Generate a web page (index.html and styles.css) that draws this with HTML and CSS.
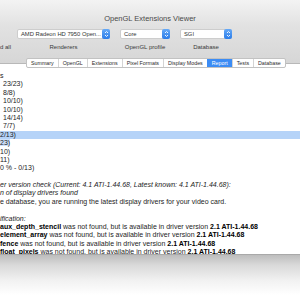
FILE: index.html
```html
<!DOCTYPE html>
<html lang="en">

<head>
  <meta charset="UTF-8">
  <title>OpenGL Extensions Viewer</title>
  <link rel="stylesheet" href="styles.css">
</head>

<body>
  <div class="window">
    <div class="toolbar">
      <div class="title">OpenGL Extensions Viewer</div>
      <div class="controls">
        <div></div>
        <div class="popup">
          <span class="popup-text">AMD Radeon HD 7950 Open...</span>
          <span class="stepper"><svg width="7" height="10" viewBox="0 0 7 10"><path d="M2 4 L3.5 2.5 L5 4 M2 6 L3.5 7.5 L5 6" fill="none" stroke="#fff" stroke-width="0.9"/></svg></span>
        </div>
        <div class="popup">
          <span class="popup-text">Core</span>
          <span class="stepper"><svg width="7" height="10" viewBox="0 0 7 10"><path d="M2 4 L3.5 2.5 L5 4 M2 6 L3.5 7.5 L5 6" fill="none" stroke="#fff" stroke-width="0.9"/></svg></span>
        </div>
        <div class="popup">
          <span class="popup-text">SGI</span>
          <span class="stepper"><svg width="7" height="10" viewBox="0 0 7 10"><path d="M2 4 L3.5 2.5 L5 4 M2 6 L3.5 7.5 L5 6" fill="none" stroke="#fff" stroke-width="0.9"/></svg></span>
        </div>
        <div class="label label-left">d all</div>
        <div class="label">Renderers</div>
        <div class="label">OpenGL profile</div>
        <div class="label">Database</div>
      </div>
      <div class="tabs">
        <span class="tab">Summary</span>
        <span class="tab">OpenGL</span>
        <span class="tab">Extensions</span>
        <span class="tab">Pixel Formats</span>
        <span class="tab">Display Modes</span>
        <span class="tab active">Report</span>
        <span class="tab">Tests</span>
        <span class="tab">Database</span>
      </div>
    </div>

    <div class="report">
      <div class="line">s</div>
      <div class="line indent">23/23)</div>
      <div class="line indent">8/8)</div>
      <div class="line indent">10/10)</div>
      <div class="line indent">10/10)</div>
      <div class="line indent">14/14)</div>
      <div class="line indent">7/7)</div>
      <div class="line selected">2/13)</div>
      <div class="line"><span class="mark">23)</span></div>
      <div class="line">10)</div>
      <div class="line">11)</div>
      <div class="line">0 % - 0/13)</div>
      <div class="line">&nbsp;</div>
      <div class="line italic">er version check (Current: 4.1 ATI-1.44.68, Latest known: 4.1 ATI-1.44.68):</div>
      <div class="line italic">n of display drivers found</div>
      <div class="line">e database, you are running the latest display drivers for your video card.</div>
      <div class="line">&nbsp;</div>
      <div class="line italic">ification:</div>
      <div class="line"><b>aux_depth_stencil</b> was not found, but is available in driver version <b>2.1 ATI-1.44.68</b></div>
      <div class="line"><b>element_array</b> was not found, but is available in driver version <b>2.1 ATI-1.44.68</b></div>
      <div class="line"><b>fence</b> was not found, but is available in driver version <b>2.1 ATI-1.44.68</b></div>
      <div class="line"><b>float_pixels</b> was not found, but is available in driver version <b>2.1 ATI-1.44.68</b></div>
    </div>
  </div>
  <div class="shadow"></div>
</body>

</html>
```

FILE: styles.css
```css
body {
  margin: 0;
  width: 300px;
  height: 300px;
  overflow: hidden;
  background: #fff;
  font-family: "Liberation Sans", Arial, sans-serif;
}

.window {
  height: 254px;
  overflow: hidden;
  border-bottom: 1px solid #a9a9a9;
  background: #fff;
}

.toolbar {
  height: 64px;
  box-sizing: border-box;
  padding-top: 15px;
  background: linear-gradient(#f3f3f3, #e2e2e2 40%, #d6d6d6);
  border-bottom: 1px solid #b8b8b8;
}

.title {
  text-align: center;
  font-size: 7.5px;
  line-height: 8px;
  color: #4a4a4a;
}

.controls {
  display: grid;
  grid-template-columns: 7px 93px 50px 52px;
  grid-template-rows: 10px 8px;
  column-gap: 10px;
  row-gap: 4px;
  margin-top: 6px;
}

.popup {
  display: flex;
  align-items: center;
  background: #fff;
  border: 1px solid #cdcdcd;
  border-radius: 2px;
  box-sizing: border-box;
  height: 10px;
  font-size: 5.8px;
  color: #333;
}

.popup-text {
  flex: 1;
  padding-left: 3px;
  white-space: nowrap;
  overflow: hidden;
}

.stepper {
  display: flex;
  width: 8px;
  height: 10px;
  margin: -1px -1px -1px 0;
  justify-content: center;
  border-radius: 2px;
  background: linear-gradient(#65a9f8, #2b7ce9);
}

.label {
  justify-self: center;
  font-size: 6px;
  line-height: 8px;
  color: #3a3a3a;
  white-space: nowrap;
}

.label-left {
  justify-self: start;
}

.tabs {
  display: inline-flex;
  margin: 4px 0 0 26px;
  height: 8px;
  background: #fff;
  border: 1px solid #c2c2c2;
  border-radius: 2px;
  font-size: 5.3px;
  line-height: 8px;
  color: #2a2a2a;
}

.tab {
  padding: 0 4px;
  border-left: 1px solid #d4d4d4;
  white-space: nowrap;
}

.tab:first-child {
  border-left: none;
}

.tab.active {
  background: #3c8cf4;
  color: #fff;
  border-left-color: #3c8cf4;
}

.report {
  padding-top: 8px;
  font-size: 7px;
  line-height: 8.4px;
  color: #1c1c1c;
}

.line {
  white-space: nowrap;
  height: 8.4px;
}

.indent {
  padding-left: 3px;
}

.selected {
  background: #b5d3f8;
}

.mark {
  background: #cfe1fa;
}

.italic {
  font-style: italic;
}

.line b {
  color: #000;
}

.shadow {
  height: 45px;
  background: linear-gradient(#bdbdbd, #d9d9d9 10px, #f2f2f2 26px, #fff 40px);
}
```
